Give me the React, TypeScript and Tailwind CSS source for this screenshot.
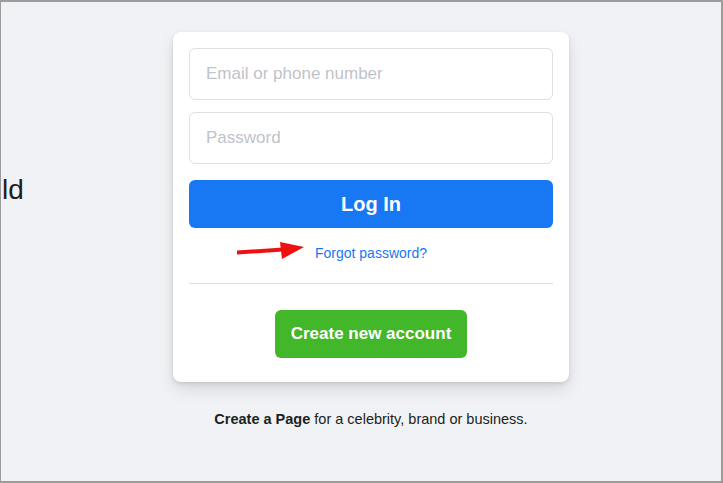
import * as React from "react";

function RedArrow() {
  return (
    <svg
      className="absolute left-[63px] top-[206px]"
      width="72"
      height="24"
      viewBox="0 0 72 24"
    >
      <path d="M1 12.5 L47 9.5 L47 13.5 L1 16.5 Z" fill="#ee1111" />
      <polygon points="44,4 68,9 46,21" fill="#ee1111" />
    </svg>
  );
}

export default function App() {
  return (
    <div
      className="w-[723px] h-[483px] overflow-hidden border-2 border-l border-[#9c9c9c] bg-[#f0f2f5] text-[#1c1e21]"
      style={{ fontFamily: '"Liberation Sans", Arial, Helvetica, sans-serif' }}
    >
      <div className="flex">
        <div className="w-[172px] shrink-0 pt-[172px] pl-[1px]">
          <p className="text-[28px] leading-[32px] text-[#1c1e21]">ld</p>
        </div>

        <div className="flex flex-col items-center pt-[30px]">
          <div className="relative w-[396px] rounded-lg bg-white px-4 pt-4 pb-6 shadow-[0_2px_4px_rgba(0,0,0,0.1),0_8px_16px_rgba(0,0,0,0.1)]">
            <div className="flex flex-col gap-3">
              <input
                type="text"
                placeholder="Email or phone number"
                className="h-[52px] w-full rounded-md border border-[#dddfe2] px-4 text-[17px] text-[#1c1e21] placeholder:text-[#bfc3ca] outline-none"
              />
              <input
                type="password"
                placeholder="Password"
                className="h-[52px] w-full rounded-md border border-[#dddfe2] px-4 text-[17px] text-[#1c1e21] placeholder:text-[#bfc3ca] outline-none"
              />
            </div>
            <button
              type="button"
              className="mt-4 h-12 w-full rounded-md bg-[#1877f2] text-[20px] font-bold text-white"
            >
              Log In
            </button>
            <div className="mt-4 text-center text-[14px] leading-[19px]">
              <a href="#" className="text-[#1877f2]">
                Forgot password?
              </a>
            </div>
            <div className="mt-5 h-px bg-[#dadde1]" />
            <div className="mt-[26px] flex justify-center">
              <button
                type="button"
                className="h-12 rounded-md bg-[#42b72a] px-4 text-[17px] font-bold text-white"
              >
                Create new account
              </button>
            </div>
            <RedArrow />
          </div>

          <p className="mt-[28px] text-[14.5px] leading-[18px] text-[#1c1e21]">
            <span className="font-bold">Create a Page</span> for a celebrity, brand or business.
          </p>
        </div>
      </div>
    </div>
  );
}
